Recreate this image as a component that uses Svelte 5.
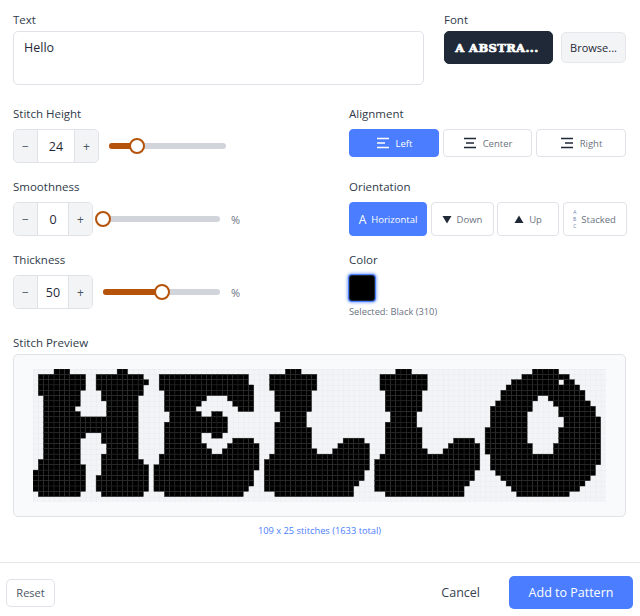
<script>
  const alignments = ['Left', 'Center', 'Right'];
  const orientations = ['Horizontal', 'Down', 'Up', 'Stacked'];

  let text = $state('Hello');
  let alignment = $state('Left');
  let orientation = $state('Horizontal');
  let height = $state(24);
  let smoothness = $state(0);
  let thickness = $state(50);

  const COLS = 109;
  const ROWS = 25;

  // stitched letters, one string per row: "from-to" runs of filled columns
  const letterH = [
    '4-6 16-17', '1-9 12-20', '1-9 12-21', '1-9 12-20', '1-8 13-20', '2-8 13-19',
    '2-8 14-19', '2-7 14-19', '2-8 14-19', '2-19', '2-19', '2-19', '2-9 13-19',
    '2-8 13-19', '2-8 14-19', '2-8 14-19', '2-8 13-19', '1-8 13-20', '1-9 13-21',
    '0-9 13-21', '0-9 12-21', '0-9 12-21', '0-9 12-21', '1-8 13-20'
  ];
  const letterE = [
    '', '24-40', '24-40', '24-41', '25-41', '25-32 37-41', '25-31 38-41', '25-30 39-41',
    '26-31 34-35', '26-36', '25-36', '25-36', '25-31 34-35', '25-31 38-41', '25-32 37-42',
    '25-33 36-42', '24-42', '24-42', '23-42', '23-41', '23-41', '23-41', '23-40', '25-39'
  ];
  const letterL = [
    '48-50', '45-53', '45-53', '45-53', '46-52', '46-52', '46-52', '46-52', '47-51', '47-51',
    '46-51', '46-52', '46-52', '46-52 59-62', '46-52 58-63', '46-53 57-63', '45-63', '44-63',
    '44-63', '44-62', '44-62', '44-61', '44-60', '46-60'
  ];
  const letterO = [
    '95-99', '93-101', '91-99 101-102', '90-103', '89-104', '89-95 98-104', '88-94 99-105',
    '87-94 100-106', '87-93 100-106', '87-93 101-107', '87-93 101-107', '86-93 100-107',
    '86-93 100-107', '86-93 100-107', '86-94 99-107', '86-94 99-107', '87-107', '87-107',
    '87-106', '88-106', '89-105', '90-104', '91-103', '92-101'
  ];

  function toCells(rows, shift = 0) {
    const cells = [];
    rows.forEach((row, y) => {
      for (const run of row.split(' ').filter(Boolean)) {
        const [from, to] = run.split('-').map(Number);
        for (let x = from; x <= to; x++) cells.push([x + shift, y]);
      }
    });
    return cells;
  }

  const cells = [
    ...toCells(letterH),
    ...toCells(letterE),
    ...toCells(letterL),
    ...toCells(letterL, 21),
    ...toCells(letterO)
  ];
</script>

{#snippet stepper(value, onchange, wide)}
  <div class="stepper" class:wide>
    <button onclick={() => onchange(value - 1)}>−</button>
    <span class="value">{value}</span>
    <button onclick={() => onchange(value + 1)}>+</button>
  </div>
{/snippet}

{#snippet slider(percent)}
  <div class="track">
    <div class="fill" style="width: {percent}%"></div>
    <div class="thumb" style="left: {percent}%"></div>
  </div>
{/snippet}

<div class="dialog">
  <div class="top">
    <div class="field grow">
      <span class="label">Text</span>
      <textarea bind:value={text}></textarea>
    </div>
    <div class="field">
      <span class="label">Font</span>
      <div class="font-row">
        <button class="font-btn">A ABSTRA...</button>
        <button class="browse">Browse...</button>
      </div>
    </div>
  </div>

  <div class="settings">
    <div class="field">
      <span class="label">Stitch Height</span>
      <div class="control">
        {@render stepper(height, (v) => (height = v), true)}
        <div class="slider-wrap tall">{@render slider(24)}</div>
      </div>
    </div>
    <div class="field">
      <span class="label">Alignment</span>
      <div class="segments three">
        {#each alignments as item}
          <button class="seg" class:active={alignment === item} onclick={() => (alignment = item)}>
            <svg width="14" height="12" viewBox="0 0 14 12" stroke="currentColor" stroke-width="1.5" fill="none">
              {#if item === 'Left'}
                <path d="M1 1.5h12M1 6h8M1 10.5h12" />
              {:else if item === 'Center'}
                <path d="M1 1.5h12M3 6h8M1 10.5h12" />
              {:else}
                <path d="M1 1.5h12M5 6h8M1 10.5h12" />
              {/if}
            </svg>
            <span>{item}</span>
          </button>
        {/each}
      </div>
    </div>

    <div class="field">
      <span class="label">Smoothness</span>
      <div class="control">
        {@render stepper(smoothness, (v) => (smoothness = v))}
        <div class="slider-wrap">{@render slider(0)}</div>
        <span class="unit">%</span>
      </div>
    </div>
    <div class="field">
      <span class="label">Orientation</span>
      <div class="segments four">
        {#each orientations as item}
          <button class="seg tall-seg" class:active={orientation === item} onclick={() => (orientation = item)}>
            {#if item === 'Horizontal'}
              <span class="glyph-a">A</span>
            {:else if item === 'Down'}
              <svg width="10" height="9" viewBox="0 0 10 9"><path d="M0.5 1h9L5 8.5z" fill="#1f2937" /></svg>
            {:else if item === 'Up'}
              <svg width="10" height="9" viewBox="0 0 10 9"><path d="M5 0.5L9.5 8h-9z" fill="#1f2937" /></svg>
            {:else}
              <span class="abc"><span>A</span><span>B</span><span>C</span></span>
            {/if}
            <span>{item}</span>
          </button>
        {/each}
      </div>
    </div>

    <div class="field">
      <span class="label">Thickness</span>
      <div class="control">
        {@render stepper(thickness, (v) => (thickness = v))}
        <div class="slider-wrap">{@render slider(50)}</div>
        <span class="unit">%</span>
      </div>
    </div>
    <div class="field">
      <span class="label">Color</span>
      <div class="swatch"></div>
      <span class="selected">Selected: Black (310)</span>
    </div>
  </div>

  <div class="preview-section">
    <span class="label">Stitch Preview</span>
    <div class="preview">
      <svg class="stitches" viewBox="0 0 {COLS} {ROWS}" preserveAspectRatio="none">
        <defs>
          <pattern id="cell" width="1" height="1" patternUnits="userSpaceOnUse">
            <path d="M1 0H0V1" fill="none" stroke="#e5e7eb" stroke-width="0.12" />
          </pattern>
        </defs>
        <rect width={COLS} height={ROWS} fill="#f3f4f6" />
        <rect width={COLS} height={ROWS} fill="url(#cell)" />
        {#each cells as [x, y]}
          <rect {x} {y} width="1" height="1" fill="#000" stroke="#2b2b2b" stroke-width="0.08" />
        {/each}
      </svg>
    </div>
    <p class="caption">109 x 25 stitches (1633 total)</p>
  </div>

  <footer>
    <button class="reset">Reset</button>
    <div class="actions">
      <button class="cancel">Cancel</button>
      <button class="primary">Add to Pattern</button>
    </div>
  </footer>
</div>

<style>
  :global(body) {
    background: #fff;
    font-family: "Open Sans", "Noto Sans", sans-serif;
    color: #374151;
  }

  button {
    font-family: inherit;
    cursor: pointer;
  }

  .dialog {
    width: 640px;
    height: 616px;
    box-sizing: border-box;
    display: flex;
    flex-direction: column;
    overflow: hidden;
  }

  .top {
    display: flex;
    gap: 20px;
    padding: 12px 14px 0 13px;
  }

  .field {
    display: flex;
    flex-direction: column;
    min-width: 0;
  }

  .grow {
    flex: 1;
  }

  .label {
    font-size: 11.5px;
    font-weight: 500;
    line-height: 15px;
    height: 15px;
    margin-bottom: 4px;
    color: #2f3a4a;
  }

  textarea {
    box-sizing: border-box;
    height: 54px;
    resize: none;
    border: 1px solid #e0e2e8;
    border-radius: 5px;
    padding: 7px 10px;
    font-family: inherit;
    font-size: 12.5px;
    line-height: 18px;
    color: #1f2937;
    outline: none;
  }

  .font-row {
    display: flex;
    gap: 8px;
    align-items: flex-start;
  }

  .font-btn {
    width: 109px;
    height: 33px;
    border: 1px solid #1f2937;
    border-radius: 5px;
    background: #1f2937;
    color: #fff;
    font-family: "DejaVu Serif", serif;
    font-weight: 700;
    font-size: 11.5px;
    letter-spacing: 0.4px;
    padding: 0 3px 0 0;
    white-space: nowrap;
    -webkit-text-stroke: 0.7px #fff;
  }

  .browse {
    width: 65px;
    height: 31px;
    margin-top: 1px;
    border: 1px solid #e5e7eb;
    border-radius: 5px;
    background: #f3f4f6;
    font-size: 11px;
    color: #1f2937;
    padding: 0;
  }

  .settings {
    display: grid;
    grid-template-columns: 316px 277px;
    column-gap: 20px;
    row-gap: 16px;
    padding: 21px 14px 0 13px;
  }

  .settings .label {
    margin-bottom: 8px;
  }

  .control {
    display: flex;
    align-items: center;
    height: 34px;
  }

  .stepper {
    box-sizing: border-box;
    display: flex;
    width: 80px;
    height: 34px;
    border: 1px solid #e0e2e8;
    border-radius: 5px;
    overflow: hidden;
    flex: none;
  }

  .stepper.wide {
    width: 86px;
  }

  .stepper button {
    width: 23px;
    flex: none;
    border: none;
    background: #f3f4f6;
    color: #4b5563;
    font-size: 12px;
    padding: 0;
  }

  .value {
    flex: 1;
    display: flex;
    align-items: center;
    justify-content: center;
    border-left: 1px solid #e0e2e8;
    border-right: 1px solid #e0e2e8;
    font-size: 12.5px;
    color: #1f2937;
  }

  .slider-wrap {
    width: 117px;
    margin-left: 10px;
    flex: none;
  }

  .track {
    position: relative;
    height: 6px;
    border-radius: 3px;
    background: #d1d5db;
  }

  .fill {
    height: 100%;
    border-radius: 3px;
    background: #b45309;
  }

  .thumb {
    position: absolute;
    top: 50%;
    width: 16px;
    height: 16px;
    box-sizing: border-box;
    margin: -8px 0 0 -8px;
    border: 2px solid #b45309;
    border-radius: 50%;
    background: #fff;
  }

  .unit {
    margin-left: 11px;
    font-size: 11px;
    color: #6b7280;
  }

  .segments {
    display: grid;
    gap: 4px;
  }

  .three {
    grid-template-columns: 90px 89px 90px;
  }

  .four {
    grid-template-columns: 78px 63px 62px 64px;
    gap: 3.5px;
  }

  .seg {
    box-sizing: border-box;
    display: flex;
    align-items: center;
    justify-content: center;
    gap: 6px;
    height: 28px;
    border: 1px solid #e0e2e8;
    border-radius: 4px;
    background: #fff;
    color: #6b7280;
    font-size: 9.5px;
    padding: 0;
    white-space: nowrap;
  }

  .seg svg {
    color: #1f2937;
  }

  .seg.active {
    background: #4a7dff;
    border-color: #4a7dff;
    color: #fff;
  }

  .seg.active svg {
    color: #fff;
  }

  .tall-seg {
    height: 34px;
    gap: 5px;
  }

  .glyph-a {
    font-size: 12px;
  }

  .abc {
    display: flex;
    flex-direction: column;
    font-size: 5px;
    line-height: 7px;
    color: #6b83b0;
    align-items: center;
  }

  .swatch {
    box-sizing: border-box;
    width: 26px;
    height: 26px;
    background: #000;
    border: 1px solid #1f2937;
    border-radius: 3px;
    box-shadow: 0 0 0 1px #4a7dff, 0 0 3px 2px rgba(74, 125, 255, 0.6);
  }

  .selected {
    margin-top: 4px;
    font-size: 9.3px;
    line-height: 14px;
    color: #6b7280;
  }

  .preview-section {
    display: flex;
    flex-direction: column;
    padding: 0 14px 0 13px;
    margin-top: 16px;
  }

  .preview {
    box-sizing: border-box;
    height: 163px;
    border: 1px solid #e0e2e8;
    border-radius: 5px;
    background: #f9fafb;
    display: flex;
    align-items: center;
    justify-content: center;
  }

  .stitches {
    display: block;
    width: 573px;
    height: 133px;
  }

  .caption {
    margin: 7px 0 0;
    text-align: center;
    font-size: 9.3px;
    line-height: 13px;
    color: #4a7dff;
  }

  footer {
    margin-top: 25px;
    border-top: 1px solid #e5e7eb;
    display: flex;
    justify-content: space-between;
    align-items: center;
    padding: 13px 7px 0 6px;
  }

  .reset {
    width: 49px;
    height: 28px;
    border: 1px solid #e0e2e8;
    border-radius: 5px;
    background: #fff;
    color: #4b5563;
    font-size: 11px;
    padding: 0;
  }

  .actions {
    display: flex;
    align-items: center;
    gap: 29px;
  }

  .cancel {
    border: none;
    background: none;
    color: #374151;
    font-size: 12.5px;
    padding: 0;
  }

  .primary {
    width: 124px;
    height: 33px;
    border: none;
    border-radius: 5px;
    background: #4a7dff;
    color: #fff;
    font-size: 12.5px;
    padding: 0;
  }
</style>
